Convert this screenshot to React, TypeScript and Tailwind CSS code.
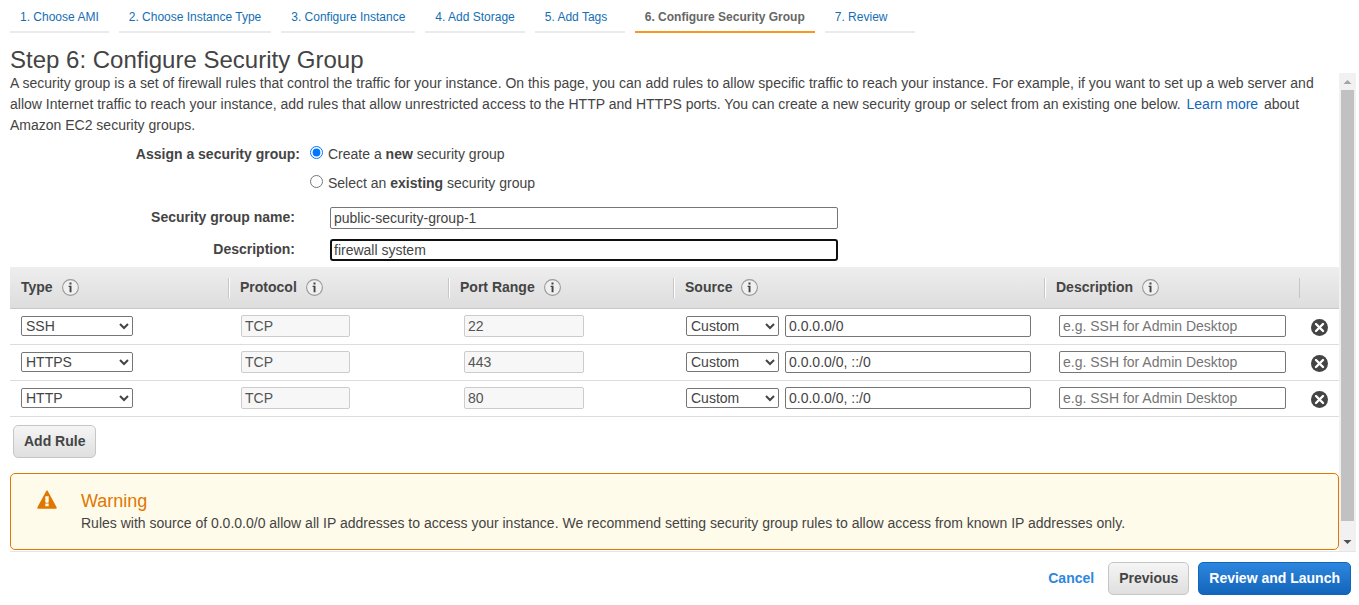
import React from "react";

const steps = [
  "1. Choose AMI",
  "2. Choose Instance Type",
  "3. Configure Instance",
  "4. Add Storage",
  "5. Add Tags",
  "6. Configure Security Group",
  "7. Review",
];
const currentStep = 5;

const columns = [
  { name: "Type", width: "w-[219px]" },
  { name: "Protocol", width: "w-[220px]" },
  { name: "Port Range", width: "w-[225px]" },
  { name: "Source", width: "w-[371px]" },
  { name: "Description", width: "w-[255px]" },
];

const rules = [
  { type: "SSH", port: "22", cidr: "0.0.0.0/0" },
  { type: "HTTPS", port: "443", cidr: "0.0.0.0/0, ::/0" },
  { type: "HTTP", port: "80", cidr: "0.0.0.0/0, ::/0" },
];

const field = "h-[22px] rounded-[2px] border border-[#767676] bg-white px-[3px] text-sm leading-5 placeholder:text-[#757575]";
const disabledField = "block h-[22px] rounded-[2px] border border-[#cccccc] bg-[#f7f7f7] px-[3px] text-sm leading-5 text-[#545454]";
const dropDown = "block h-5 rounded-[2px] border border-[#767676] bg-white text-sm leading-4 text-[#444444]";
const greyButton =
  "h-[33px] rounded-[5px] border border-[#c6c6c6] bg-linear-to-b from-[#f5f5f5] to-[#dfdfdf] px-[10px] pb-[2px] text-sm font-bold text-[#444444]";

function InfoIcon() {
  return (
    <svg width="17" height="17" viewBox="0 0 17 17" aria-hidden="true">
      <circle cx="8.5" cy="8.5" r="7.9" fill="#f0f0f0" stroke="#999999" strokeWidth="1.1" />
      <path d="M7.5 3.6h2v2h-2zM6.6 6.8h2.9v6.4H7.6V8h-1z" fill="#444444" />
    </svg>
  );
}

function RemoveIcon() {
  return (
    <svg width="17" height="17" viewBox="0 0 17 17" aria-hidden="true">
      <circle cx="8.5" cy="8.5" r="8.5" fill="#444444" />
      <path d="M5 5l7 7M12 5l-7 7" stroke="#ffffff" strokeWidth="2.4" strokeLinecap="round" />
    </svg>
  );
}

function WarningIcon() {
  return (
    <svg width="20" height="19" viewBox="0 0 20 19" aria-hidden="true">
      <path d="M10 1.4L18.8 17.8H1.2z" fill="#e07700" stroke="#e07700" strokeWidth="1.8" strokeLinejoin="round" />
      <path d="M8.3 6.2h3.4v5.6l-.5 1H8.8l-.5-1zM8.3 13.4h3.4v2.8H8.3z" fill="#fffbea" />
    </svg>
  );
}

function ScrollTrack() {
  return (
    <div className="flex w-[17px] shrink-0 flex-col items-center bg-[#f1f1f1]" aria-hidden="true">
      <svg className="shrink-0" width="17" height="17" viewBox="0 0 17 17">
        <path d="M4.5 11l4-4 4 4z" fill="#a3a3a3" />
      </svg>
      <div className="w-[13px] flex-1 bg-[#c1c1c1]" />
      <div className="h-[13px]" />
      <svg className="shrink-0" width="17" height="17" viewBox="0 0 17 17">
        <path d="M4.5 6l4 4 4-4z" fill="#505050" />
      </svg>
    </div>
  );
}

export default function App() {
  return (
    <div className="bg-white font-['Liberation_Sans',Arial,sans-serif] text-sm text-[#444444]">
      <nav className="px-[10px]" aria-label="Launch steps">
        <ol className="flex gap-[10px] text-xs">
          {steps.map((step, i) => (
            <li
              key={step}
              className={
                i === currentStep
                  ? "h-[33px] min-w-[90px] border-b-2 border-[#f8981d] px-[10px] pt-[9px] font-bold text-[#666666]"
                  : "h-[33px] min-w-[90px] border-b-2 border-[#eaeaea] px-[10px] pt-[9px] text-[#146eb4]"
              }
            >
              {i === currentStep ? <span aria-current="step">{step}</span> : <a href="#step">{step}</a>}
            </li>
          ))}
        </ol>
      </nav>

      <h1 className="px-[10px] pt-[14px] text-2xl leading-[26px]">Step 6: Configure Security Group</h1>

      <div className="mr-[3px] ml-[10px] flex border-b border-[#e5e5e5]">
        <main className="min-w-0 flex-1 pb-px">
          <p className="leading-[21px]">
            A security group is a set of firewall rules that control the traffic for your instance. On this page, you can
            add rules to allow specific traffic to reach your instance. For example, if you want to set up a web server
            and allow Internet traffic to reach your instance, add rules that allow unrestricted access to the HTTP and
            HTTPS ports. You can create a new security group or select from an existing one below.{" "}
            <a href="#learn" className="mx-[2px] text-[#1166bb]">
              Learn more
            </a>{" "}
            about Amazon EC2 security groups.
          </p>

          <fieldset className="flex pt-2 leading-[21px]">
            <legend className="float-left w-[290px] text-right font-bold">Assign a security group:</legend>
            <div className="ml-[10px] flex flex-col gap-2">
              <label className="flex gap-[5px]">
                <input type="radio" name="group" defaultChecked className="mt-[2px] size-[13px]" />
                <span>
                  Create a <b>new</b> security group
                </span>
              </label>
              <label className="flex gap-[5px]">
                <input type="radio" name="group" className="mt-[2px] size-[13px]" />
                <span>
                  Select an <b>existing</b> security group
                </span>
              </label>
            </div>
          </fieldset>

          <div className="grid grid-cols-[285px_508px] gap-x-[35px] gap-y-[10px] pt-[13px] pb-[6px] leading-5">
            <label htmlFor="group-name" className="text-right font-bold">
              Security group name:
            </label>
            <input id="group-name" defaultValue="public-security-group-1" className={field} />
            <label htmlFor="group-description" className="text-right font-bold">
              Description:
            </label>
            <input
              id="group-description"
              defaultValue="firewall system"
              className="h-[22px] rounded-[3px] border-2 border-[#101010] bg-white px-[2px] text-sm leading-[18px]"
            />
          </div>

          <table className="w-full table-fixed border-separate border-spacing-0">
            <thead>
              <tr>
                {columns.map((column, i) => (
                  <th
                    key={column.name}
                    className={`${column.width} h-[42px] border-b border-[#c8c8c8] bg-linear-to-b from-[#eeeeee] to-[#dddddd] p-0`}
                  >
                    <div className={`flex h-5 items-center gap-[9px] border-r border-[#c6c6c6] ${i === 0 ? "pl-[11px]" : "border-l border-l-white pl-[10px]"}`}>
                      <span className="pb-[2px]">{column.name}</span>
                      <InfoIcon />
                    </div>
                  </th>
                ))}
                <th className="w-[39px] border-b border-[#c8c8c8] bg-linear-to-b from-[#eeeeee] to-[#dddddd] p-0" aria-label="Remove" />
              </tr>
            </thead>
            <tbody>
              {rules.map((rule) => (
                <tr key={rule.type} className="[&>td]:h-9 [&>td]:border-b [&>td]:border-[#dddddd] [&>td]:p-0 [&>td]:pb-[2px]">
                  <td>
                    <select aria-label="Type" defaultValue={rule.type} className={`${dropDown} ml-[11px] w-[112px]`}>
                      <option>SSH</option>
                      <option>HTTPS</option>
                      <option>HTTP</option>
                    </select>
                  </td>
                  <td>
                    <input aria-label="Protocol" disabled value="TCP" className={`${disabledField} ml-3 w-[109px]`} />
                  </td>
                  <td>
                    <input aria-label="Port range" disabled value={rule.port} className={`${disabledField} ml-[15px] w-[120px]`} />
                  </td>
                  <td>
                    <div className="flex items-center gap-[6px] pr-[14px] pl-3">
                      <select aria-label="Source" className={`${dropDown} w-[93px]`}>
                        <option>Custom</option>
                        <option>Anywhere</option>
                        <option>My IP</option>
                      </select>
                      <input aria-label="Source addresses" defaultValue={rule.cidr} className={`${field} min-w-0 flex-1`} />
                    </div>
                  </td>
                  <td>
                    <div className="flex pr-[14px] pl-[14px]">
                      <input aria-label="Rule description" placeholder="e.g. SSH for Admin Desktop" className={`${field} min-w-0 flex-1`} />
                    </div>
                  </td>
                  <td>
                    <button type="button" aria-label="Remove rule" className="ml-[11px] block pt-[3px]">
                      <RemoveIcon />
                    </button>
                  </td>
                </tr>
              ))}
            </tbody>
          </table>

          <button type="button" className={`${greyButton} mt-2 ml-[3px] block`}>
            Add Rule
          </button>

          <section className="mt-[15px] flex gap-6 rounded-[5px] border border-[#e07700] bg-[#fffbea] px-[26px] pt-4 pb-[15px]">
            <WarningIcon />
            <div>
              <h2 className="text-lg leading-[22px] text-[#e07700]">Warning</h2>
              <p className="leading-[22px]">
                Rules with source of 0.0.0.0/0 allow all IP addresses to access your instance. We recommend setting
                security group rules to allow access from known IP addresses only.
              </p>
            </div>
          </section>
        </main>
        <ScrollTrack />
      </div>

      <footer className="flex items-center justify-end px-2 py-[10px]">
        <button type="button" className="mr-[14px] pb-[2px] text-sm font-bold text-[#2e86de]">
          Cancel
        </button>
        <button type="button" className={`${greyButton} mr-[9px]`}>
          Previous
        </button>
        <button
          type="button"
          className="h-[33px] rounded-[5px] border border-[#1166bb] bg-linear-to-b from-[#2e86de] to-[#1166bb] px-[10px] pb-[2px] text-sm font-bold text-white"
        >
          Review and Launch
        </button>
      </footer>
    </div>
  );
}
